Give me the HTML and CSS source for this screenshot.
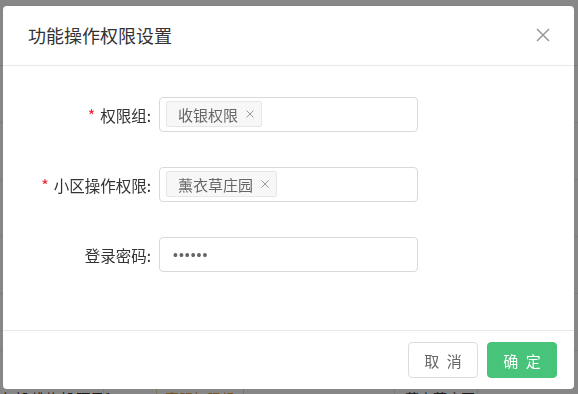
FILE: index.html
```html
<!DOCTYPE html>
<html lang="zh-CN">
<head>
<meta charset="utf-8">
<title>功能操作权限设置</title>
<link rel="stylesheet" href="styles.css">
</head>
<body>
<div class="page">
  <div class="bg-row"></div>
  <div class="bg-row"></div>
  <div class="bg-row"></div>
  <div class="bg-row"></div>
  <div class="bg-row"></div>
  <div class="bg-row"></div>
  <div class="bg-row last">
    <span class="bg-c1">财务部 维修部 项目1</span>
    <span class="bg-c2"><span class="bg-gold">客服权限组</span></span>
    <span class="bg-c3">薰衣草庄园</span>
  </div>
</div>
<div class="mask"></div>
<div class="modal">
  <div class="modal-header">
    <span class="modal-title">功能操作权限设置</span>
    <svg class="modal-close" width="14" height="14" viewBox="0 0 14 14"><path d="M1 1L13 13M13 1L1 13" stroke="#999" stroke-width="1.5" fill="none"/></svg>
  </div>
  <div class="modal-body">
    <div class="form-row">
      <label class="form-label"><span class="req">*</span>权限组:</label>
      <div class="field"><span class="tag">收银权限<svg class="tag-x" width="8" height="8" viewBox="0 0 8 8"><path d="M0.5 0.5L7.5 7.5M7.5 0.5L0.5 7.5" stroke="#999" stroke-width="1" fill="none"/></svg></span></div>
    </div>
    <div class="form-row">
      <label class="form-label"><span class="req">*</span>小区操作权限:</label>
      <div class="field"><span class="tag">薰衣草庄园<svg class="tag-x" width="8" height="8" viewBox="0 0 8 8"><path d="M0.5 0.5L7.5 7.5M7.5 0.5L0.5 7.5" stroke="#999" stroke-width="1" fill="none"/></svg></span></div>
    </div>
    <div class="form-row">
      <label class="form-label">登录密码:</label>
      <div class="field pwd"><span class="dots">••••••</span></div>
    </div>
  </div>
  <div class="modal-footer">
    <button class="btn">取 消</button>
    <button class="btn btn-primary">确 定</button>
  </div>
</div>
</body>
</html>
```

FILE: styles.css
```css
* { box-sizing: border-box; }
html, body { margin: 0; padding: 0; }
body {
  width: 578px;
  height: 394px;
  overflow: hidden;
  background: #fff;
  font-family: "Noto Sans CJK SC", "Noto Sans", sans-serif;
  color: #333;
}
.page {
  display: flex;
  flex-direction: column;
  padding-top: 9px;
}
.bg-row {
  height: 57px;
  border-bottom: 1px solid #ebebeb;
  flex: none;
}
.bg-row.last {
  height: 40px;
  border-bottom: none;
  display: flex;
  align-items: flex-start;
  padding-top: 37px;
  font-size: 14px;
  line-height: 20px;
  color: #333;
  white-space: nowrap;
}
.bg-c1 { width: 118px; margin-left: -14px; border-right: 1px solid #ebebeb; }
.bg-c2 { width: 291px; padding-left: 52px; border-right: 1px solid #ebebeb; }
.bg-gold { color: #e6a23c; border: 1px solid #f5dab1; padding: 0 8px; }
.bg-c3 { width: 83px; padding-left: 10px; border-right: 1px solid #ebebeb; }

.mask {
  position: fixed;
  inset: 0;
  background: rgba(0, 0, 0, 0.47);
}
.modal {
  position: absolute;
  left: 3px;
  top: 6px;
  width: 571px;
  background: #fff;
  border-radius: 4px;
  display: flex;
  flex-direction: column;
}
.modal-header {
  height: 60px;
  border-bottom: 1px solid #e8e8e8;
  display: flex;
  align-items: center;
  justify-content: space-between;
  padding: 0 24px 0 25px;
}
.modal-title {
  font-size: 18px;
  color: #333;
  line-height: 24px;
  margin-top: -2px;
}
.modal-close { display: block; margin-top: -1px; }
.modal-body {
  padding: 31px 0 58px 0;
  display: flex;
  flex-direction: column;
  gap: 35px;
}
.form-row {
  display: grid;
  grid-template-columns: 148px 259px;
  column-gap: 8px;
  align-items: center;
}
.form-label {
  text-align: right;
  font-size: 15.5px;
  color: #333;
  white-space: nowrap;
}
.req {
  color: #f5222d;
  margin-right: 5px;
  font-size: 16px;
}
.field {
  height: 35px;
  border: 1px solid #d9d9d9;
  border-radius: 4px;
  padding: 3px 6px;
  display: flex;
  align-items: flex-start;
}
.tag {
  height: 26px;
  display: inline-flex;
  align-items: center;
  gap: 8px;
  padding: 0 7px 0 11px;
  background: #f7f7f7;
  border: 1px solid #e6e6e6;
  border-radius: 2px;
  font-size: 15px;
  color: #666;
}
.tag-x { display: block; }
.field.pwd {
  align-items: center;
  padding: 0 13px;
}
.dots {
  font-family: "Liberation Sans", sans-serif;
  font-size: 14px;
  letter-spacing: 1px;
  color: #666;
}
.modal-footer {
  height: 59px;
  border-top: 1px solid #e8e8e8;
  display: flex;
  justify-content: flex-end;
  align-items: flex-start;
  gap: 9px;
  padding: 11px 17px 0 0;
}
.btn {
  width: 70px;
  height: 36px;
  border: 1px solid #dcdcdc;
  border-radius: 4px;
  background: #fff;
  color: #666;
  font-family: "Noto Sans CJK SC", sans-serif;
  font-size: 15px;
  padding: 0;
  letter-spacing: 2px;
  text-indent: 2px;
}
.btn-primary {
  background: #47c47a;
  border-color: #47c47a;
  color: #fff;
}
```
